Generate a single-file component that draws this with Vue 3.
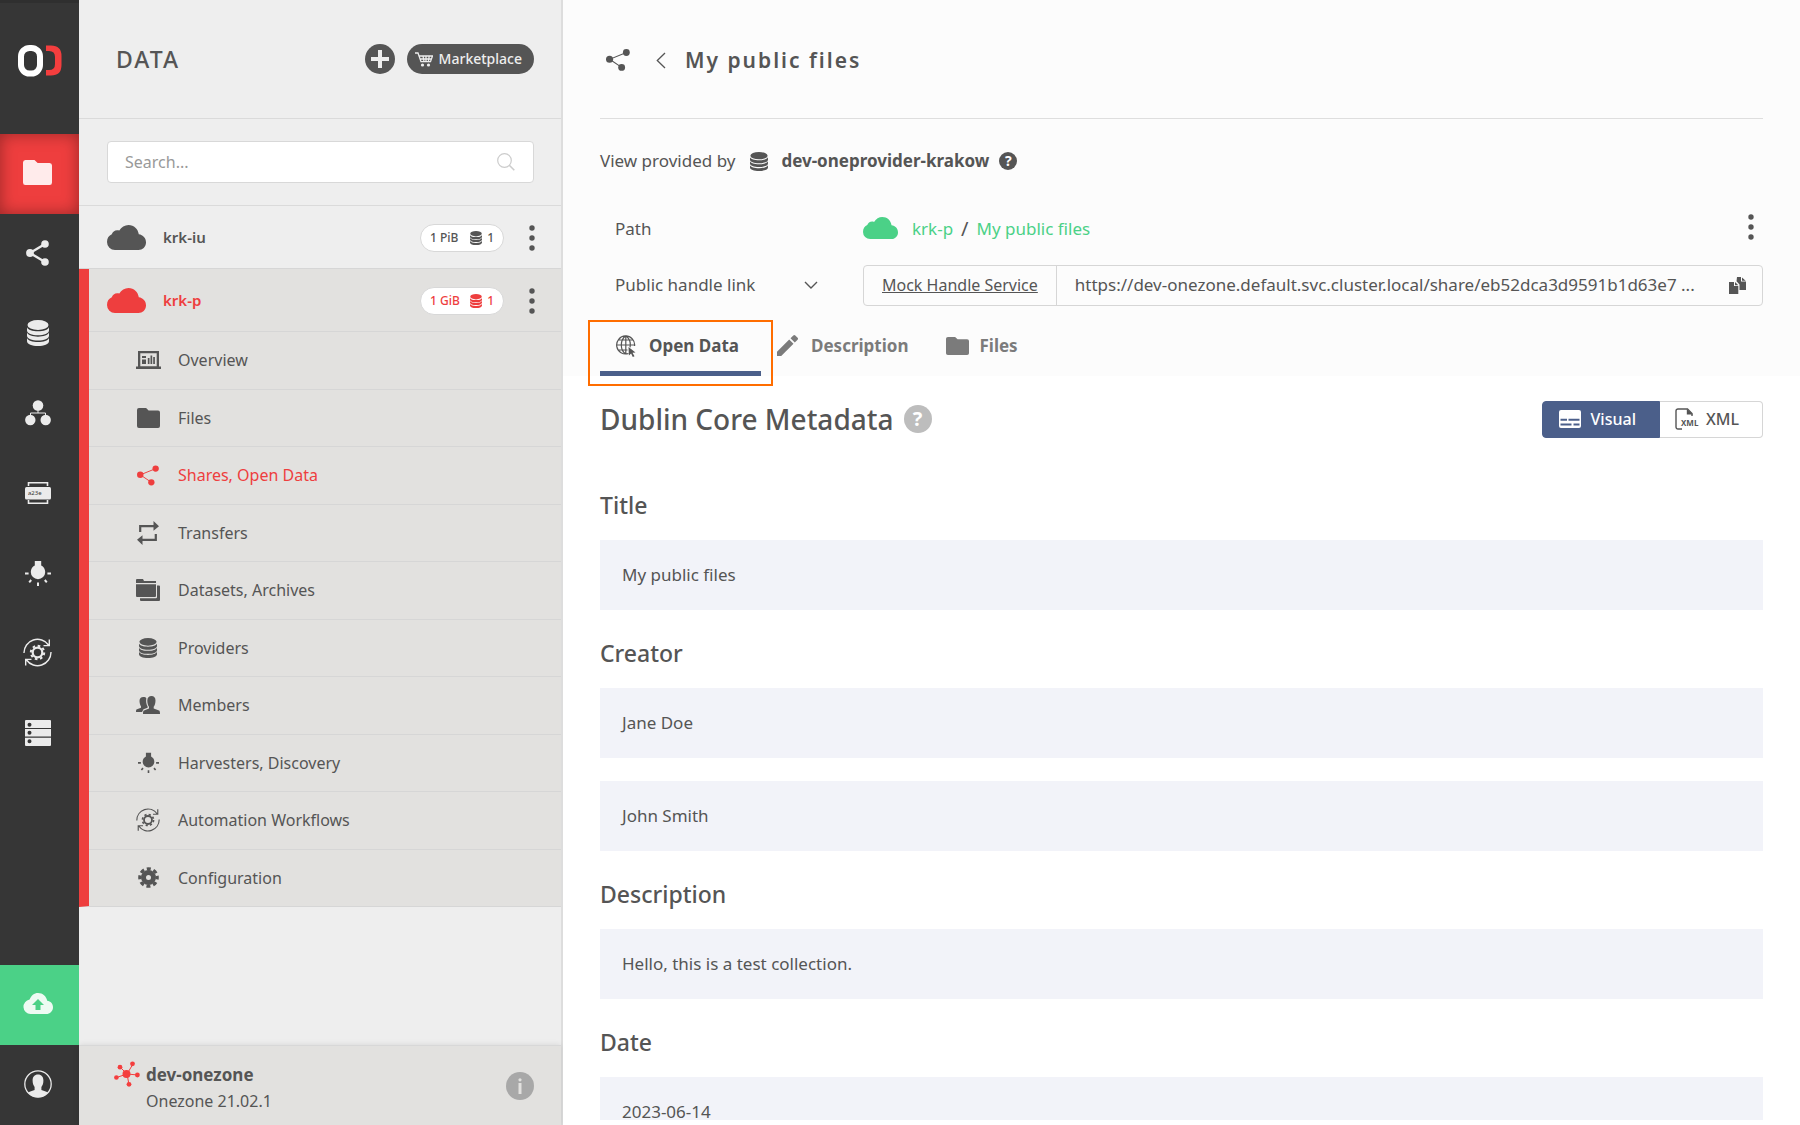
<script setup>
import { ref } from 'vue'

const railItems = [
  { id: 'folder', label: 'Data', w: 29, h: 25, active: true },
  { id: 'share', label: 'Shares', w: 23, h: 26 },
  { id: 'db', label: 'Providers', w: 22, h: 26 },
  { id: 'groups', label: 'Groups', w: 26, h: 26 },
  { id: 'token', label: 'Tokens', w: 26, h: 24 },
  { id: 'bulb', label: 'Discovery', w: 26, h: 26 },
  { id: 'auto', label: 'Automation', w: 29, h: 29 },
  { id: 'server', label: 'Clusters', w: 26, h: 26 },
]

const spaces = [
  { name: 'krk-iu', size: '1 PiB', count: 1 },
  { name: 'krk-p', size: '1 GiB', count: 1, active: true },
]

const menu = [
  { id: 'overview', label: 'Overview', w: 25, h: 18 },
  { id: 'folder', label: 'Files', w: 23, h: 20 },
  { id: 'shares', label: 'Shares, Open Data', w: 22, h: 21, active: true },
  { id: 'transfer', label: 'Transfers', w: 22, h: 24 },
  { id: 'datasets', label: 'Datasets, Archives', w: 24, h: 22 },
  { id: 'db', label: 'Providers', w: 18, h: 20 },
  { id: 'members', label: 'Members', w: 24, h: 18 },
  { id: 'bulb', label: 'Harvesters, Discovery', w: 21, h: 21 },
  { id: 'auto', label: 'Automation Workflows', w: 24, h: 24 },
  { id: 'gear', label: 'Configuration', w: 21, h: 21 },
]

const sections = [
  { name: 'Title', values: ['My public files'] },
  { name: 'Creator', values: ['Jane Doe', 'John Smith'] },
  { name: 'Description', values: ['Hello, this is a test collection.'] },
  { name: 'Date', values: ['2023-06-14'] },
]

const search = ref('')
const handleUrl = ref('https://dev-onezone.default.svc.cluster.local/share/eb52dca3d9591b1d63e7 ...')
</script>

<template>
  <svg class="defs" aria-hidden="true">
    <symbol id="folder" viewBox="0 0 24 20" preserveAspectRatio="none">
      <path fill="currentColor" d="M2 0h7.5l2.6 2.4H22a2 2 0 0 1 2 2V18a2 2 0 0 1-2 2H2a2 2 0 0 1-2-2V2a2 2 0 0 1 2-2z" />
    </symbol>
    <symbol id="share" viewBox="0 0 23 26">
      <path stroke="currentColor" stroke-width="2.4" d="M19 4 4 13l15 9" fill="none" />
      <circle cx="19" cy="4" r="3.8" fill="currentColor" /><circle cx="4" cy="13" r="3.9" fill="currentColor" /><circle cx="19" cy="22" r="3.8" fill="currentColor" />
    </symbol>
    <symbol id="shares" viewBox="0 0 23 21">
      <path stroke="currentColor" stroke-width="1" d="M19.5 3.3 3.5 9.8 15 17.6" fill="none" />
      <circle cx="19.5" cy="3.3" r="3.3" fill="currentColor" /><circle cx="3.4" cy="9.8" r="3.4" fill="currentColor" /><circle cx="15" cy="17.6" r="3.3" fill="currentColor" />
    </symbol>
    <symbol id="db" viewBox="0 0 22 26" preserveAspectRatio="none">
      <g fill="currentColor">
        <ellipse cx="11" cy="5" rx="10.5" ry="5" />
        <path d="M0 7.2c1 2.6 5.500 4.100 11 4.100s10-1.500 11-4.100v3.300c0 3-5 4.800-11 4.800s-11-1.800-11-4.800z" />
        <path d="M0 12.600c1 2.600 5.500 4.100 11 4.100s10-1.500 11-4.100v3.200c0 3-5 4.800-11 4.800s-11-1.800-11-4.800z" />
        <path d="M0 18c1 2.600 5.500 4.100 11 4.100s10-1.500 11-4.100v3.200c0 3-5 4.800-11 4.800s-11-1.800-11-4.800z" />
      </g>
    </symbol>
    <symbol id="groups" viewBox="0 0 26 26">
      <path d="M13 8v5M5.500 17v-4h15v4" stroke="currentColor" fill="none" />
      <g fill="currentColor"><circle cx="13" cy="5.500" r="5.300" /><circle cx="5.300" cy="20" r="5.200" /><circle cx="20.700" cy="20" r="5.200" /></g>
    </symbol>
    <symbol id="token" viewBox="0 0 26 24">
      <path d="M3.500 5V1.800h19V5M3.500 19v3.200h19V19" stroke="currentColor" stroke-width="1.600" fill="none" />
      <rect y="6" width="26" height="12.500" rx="1.500" fill="currentColor" />
    </symbol>
    <symbol id="bulb" viewBox="0 0 26 26">
      <path fill="currentColor" d="M9.800 1h6.400v4.500c2.400 1.200 4 3.600 4 6.500a7.200 7.200 0 0 1-14.400 0c0-2.900 1.600-5.300 4-6.500z" />
      <path stroke="currentColor" stroke-width="2" d="M0 13.500h3.600M22.400 13.500H26M13 22.500V26M6.200 20l-2 2.300M19.800 20l2 2.300" />
    </symbol>
    <symbol id="auto" viewBox="0 0 29 29">
      <g fill="none" stroke="currentColor" stroke-width="1.400">
        <path d="M1 15A13.500 13.500 0 0 1 25.500 7M26.300 1.500V7.600H20.500M28 14A13.500 13.500 0 0 1 3.500 22M2.700 27.500V21.400H8.500" />
        <circle cx="14.500" cy="14.500" r="4.800" stroke-width="2.200" />
        <circle cx="14.500" cy="14.500" r="6.700" stroke-width="2" stroke-dasharray="2.630 2.630" />
      </g>
    </symbol>
    <symbol id="gear" viewBox="0 0 21 21">
      <g fill="none" stroke="currentColor">
        <circle cx="10.500" cy="10.500" r="5" stroke-width="5" />
        <circle cx="10.500" cy="10.500" r="8.700" stroke-width="3.200" stroke-dasharray="4 2.833" stroke-dashoffset="2" />
      </g>
    </symbol>
    <symbol id="server" viewBox="0 0 26 26">
      <path fill="currentColor" fill-rule="evenodd" d="M1 0h24a1 1 0 0 1 1 1v7H0V1a1 1 0 0 1 1-1zM4.500 2.800a2 2 0 1 0 0 4 2 2 0 0 0 0-4zM0 9h26v7.500H0zM4.500 10.800a2 2 0 1 0 0 4 2 2 0 0 0 0-4zM0 17.700h26V25a1 1 0 0 1-1 1H1a1 1 0 0 1-1-1zM4.500 19.300a2 2 0 1 0 0 4 2 2 0 0 0 0-4z" />
    </symbol>
    <symbol id="cloud" viewBox="0 0 39 25" preserveAspectRatio="none">
      <path fill="currentColor" d="M8 25a8 8 0 0 1-8-8c0-4 2-6.600 4.800-7.800C5.500 6.300 9 4.300 12.300 5.600 14.300 2.200 17.800 0 21.500 0c5.500 0 9.500 4 10.300 9.300C36 10 39 13 39 17.500c0 4.500-3.500 7.500-7.500 7.500z" />
    </symbol>
    <symbol id="overview" viewBox="0 0 25 18">
      <path fill="currentColor" fill-rule="evenodd" d="M2 0h21v15.500h2V18H0v-2.500h2zM4.300 2.200v13h16.400v-13z" />
      <path fill="currentColor" d="M6 5h4v2H6zM6 9h4v4H6zM6 8h4v.6H6zM11.800 7h1.700v6h-1.700zM14.500 4.500h1.700V13h-1.700zM17.200 6h1.700v7h-1.700z" />
    </symbol>
    <symbol id="transfer" viewBox="0 0 22 24">
      <path d="M3.200 11V5.200H18M18.800 13v5.800H4" stroke="currentColor" stroke-width="2.200" fill="none" />
      <path fill="currentColor" d="M16.500 0 22 5.200l-5.500 4.600zM5.500 14.200 0 18.800 5.500 24z" />
    </symbol>
    <symbol id="datasets" viewBox="0 0 24 22">
      <path fill="currentColor" d="M1 0h6l1 2h12v2H0V1a1 1 0 0 1 1-1zM0 5.300h20V17a1 1 0 0 1-1 1H1a1 1 0 0 1-1-1zM21 6.500h2a1 1 0 0 1 1 1V21a1 1 0 0 1-1 1H5a1 1 0 0 1-1-1v-1.700h16a1 1 0 0 0 1-1z" />
    </symbol>
    <symbol id="members" viewBox="0 0 24 18">
      <path fill="currentColor" d="M15.500 0c2.500 0 4 1.500 4 4.500 0 3-.8 5-1.800 6.300v1.700l5.300 2c.7.300 1 1.300 1 3.500H7c0-2.200.3-3.200 1-3.500l5-2v-1.700C12 9.500 11.300 7.500 11.300 4.500 11.300 1.500 13 0 15.500 0zM7.300 1C9 1 10 1.500 10.300 2.200c-.5 3.500 0 6 1.300 8.300v1.200L7.500 13.300 6 16H0c0-1.600.2-2.400 1-2.700l4-1.500v-1.500C4 9 3.500 7 3.500 4.800 3.500 2.300 5 1 7.300 1z" />
    </symbol>
    <symbol id="search" viewBox="0 0 18 18">
      <g fill="none" stroke="currentColor" stroke-width="1.200"><circle cx="7.500" cy="7.500" r="6.800" /><path d="m12.300 12.300 5 5" stroke-width="1.600" /></g>
    </symbol>
    <symbol id="dots" viewBox="0 0 6 26">
      <g fill="currentColor"><circle cx="3" cy="3" r="2.700" /><circle cx="3" cy="13" r="2.700" /><circle cx="3" cy="23" r="2.700" /></g>
    </symbol>
    <symbol id="cart" viewBox="0 0 18 15">
      <g fill="none" stroke="currentColor" stroke-width="1.300"><path d="M0 1h3l3 8.700h9.500L17.500 4H4.300M8 4l1 5.500M11 4v5.500M14.200 4l-.8 5.500M4.800 7h11.500" /></g>
      <circle cx="7.500" cy="13" r="1.600" fill="currentColor" /><circle cx="13.500" cy="13" r="1.600" fill="currentColor" />
    </symbol>
    <symbol id="upload" viewBox="0 0 30 21" preserveAspectRatio="none">
      <path fill="currentColor" fill-rule="evenodd" d="M7.500 21A7.300 7.300 0 0 1 6.600 6.500C8 2.700 11.200 0 15 0c4.800 0 8.300 3.300 9.200 7.700C27.600 8 30 10.700 30 14.200c0 3.900-3 6.800-6.800 6.800zM15 6l-6 6h3.500v5h5v-5H21z" />
    </symbol>
    <symbol id="user" viewBox="0 0 28 28">
      <circle cx="14" cy="14" r="13.200" fill="none" stroke="currentColor" stroke-width="1.300" />
      <path fill="currentColor" d="M14 4.500c3.500 0 5.400 2.400 5.400 6 0 3.500-1 5-2 6.500v3l4.300 1.500c1 .4 1.600.8 2 1.200A13 13 0 0 1 14 27.300a13 13 0 0 1-9.700-4.600c.4-.4 1-.8 2-1.200l4.300-1.500v-3c-1-1.500-2-3-2-6.500 0-3.600 1.900-6 5.400-6z" />
    </symbol>
    <symbol id="zone" viewBox="0 0 26 26">
      <path stroke="currentColor" d="m13 13 6-10M13 13 6 6M13 13 2.500 16.500M13 13l11 1M13 13l2 10.500" />
      <g fill="currentColor"><circle cx="12.500" cy="13" r="4" /><circle cx="18.500" cy="2.800" r="2.400" /><circle cx="6" cy="6.200" r="2.400" /><circle cx="2.400" cy="16.500" r="2.300" /><circle cx="23.400" cy="14" r="2.400" /><circle cx="15" cy="23.300" r="2.400" /></g>
    </symbol>
    <symbol id="left" viewBox="0 0 10 17"><path d="m9 1-7.700 7.500L9 16" fill="none" stroke="currentColor" stroke-width="1.300" /></symbol>
    <symbol id="down" viewBox="0 0 14 8"><path d="m1 1 6 6 6-6" fill="none" stroke="currentColor" stroke-width="1.400" /></symbol>
    <symbol id="copy" viewBox="0 0 17 17">
      <path fill="currentColor" d="M0 5h5v4h4.300v8H0zM6 5l3.300 3.200H6zM8 0h4v4.500h5V13h-6.500V7.500L7.500 4.300zM13 .5l3.700 3.200H13z" />
    </symbol>
    <symbol id="globe" viewBox="0 0 20 22">
      <g fill="none" stroke="currentColor" stroke-width="1.200"><path d="M12.500 18.500A9 9 0 1 1 18.600 11M9.800.8C3.800 5 3.800 15 9.800 19M9.800.8c3.800 2.800 5 7.500 4.200 11.500M9.800.8V19M.8 10h18M2.500 5h15M2.500 15h9" /></g>
      <path fill="currentColor" d="m12.500 12 7 5.500-3 .3 2 3.500-1.700.7-1.700-3.500-2.200 2z" />
    </symbol>
    <symbol id="pencil" viewBox="0 0 21 21">
      <path fill="currentColor" d="M0 16.800 12.200 4.500l4.300 4.300L4.200 21H0zM13.500 3.300l2.800-2.800a1.500 1.500 0 0 1 2 0l2.300 2.300a1.500 1.500 0 0 1 0 2l-2.800 2.800z" />
    </symbol>
    <symbol id="visual" viewBox="0 0 22 18" preserveAspectRatio="none">
      <path fill="currentColor" fill-rule="evenodd" d="M2 0h18a2 2 0 0 1 2 2v14a2 2 0 0 1-2 2H2a2 2 0 0 1-2-2V2a2 2 0 0 1 2-2zM1.500 8.800v2h6.500v-2zM9.500 8.800v2h11v-2zM1.500 13.500v2h11v-2zM14.500 13.500v2h6v-2z" />
    </symbol>
    <symbol id="xml" viewBox="0 0 24 22">
      <path d="M7 21H3a2 2 0 0 1-2-2V3a2 2 0 0 1 2-2h9.500L17 5.500V8" fill="none" stroke="currentColor" stroke-width="1.400" />
      <path d="M11.800 1v5.500H18z" fill="currentColor" />
    </symbol>
  </svg>

  <div class="app">
    <nav class="rail" aria-label="Main">
      <a class="logo" href="#" aria-label="Onedata">
        <svg width="44" height="32" viewBox="0 0 44 32">
          <rect x="3" y="3" width="19" height="25.500" rx="8.500" fill="none" stroke="#fff" stroke-width="6" />
          <path d="M28 0.500h5q10.500 0 10.500 10.500v9q0 10.500-10.500 10.500h-5v-5.500h3q6 0 6-6v-7q0-6-6-6h-3z" fill="#f43e3e" />
        </svg>
      </a>
      <a v-for="r in railItems" :key="r.id" href="#" class="rail-item" :class="{ active: r.active }" :aria-label="r.label">
        <svg :width="r.w" :height="r.h"><use :href="'#' + r.id" /><text v-if="r.id === 'token'" x="3" y="14" class="token-text">a23e</text></svg>
      </a>
      <a href="#" class="rail-item upload" aria-label="Upload"><svg width="30" height="21"><use href="#upload" /></svg></a>
      <a href="#" class="rail-item" aria-label="Account"><svg width="28" height="28"><use href="#user" /></svg></a>
    </nav>

    <aside class="sidebar">
      <header class="side-head">
        <h2>DATA</h2>
        <button class="add" aria-label="Add"><svg width="18" height="18" viewBox="0 0 18 18"><path d="M9 0v18M0 9h18" stroke="#eee" stroke-width="4" /></svg></button>
        <button class="market"><svg width="18" height="15"><use href="#cart" /></svg>Marketplace</button>
      </header>
      <div class="search-row">
        <label class="search">
          <input v-model="search" type="text" placeholder="Search..." aria-label="Search" />
          <svg width="18" height="18"><use href="#search" /></svg>
        </label>
      </div>
      <div v-for="s in spaces" :key="s.name" class="space" :class="{ active: s.active }">
        <div class="space-row">
          <svg class="cloud" width="39" height="25"><use href="#cloud" /></svg>
          <a href="#" class="space-name">{{ s.name }}</a>
          <div class="space-side">
            <span class="badge"><span>{{ s.size }}</span><span class="count"><svg width="12" height="14"><use href="#db" /></svg>{{ s.count }}</span></span>
            <button class="bare" aria-label="Space actions"><svg width="6" height="26"><use href="#dots" /></svg></button>
          </div>
        </div>
        <ul v-if="s.active" class="menu">
          <li v-for="m in menu" :key="m.label">
            <a href="#" :class="{ current: m.active }"><span class="menu-icon"><svg :width="m.w" :height="m.h"><use :href="'#' + m.id" /></svg></span>{{ m.label }}</a>
          </li>
        </ul>
      </div>
      <footer class="side-foot">
        <svg class="zone" width="26" height="26"><use href="#zone" /></svg>
        <div class="zone-text"><strong>dev-onezone</strong><span>Onezone 21.02.1</span></div>
        <button class="info" aria-label="Information"><svg width="28" height="28" viewBox="0 0 28 28"><circle cx="14" cy="14" r="14" fill="#a8a8a8" /><circle cx="14" cy="7.800" r="1.600" fill="#e2e1df" /><path d="M14 11v11" stroke="#e2e1df" stroke-width="3" /></svg></button>
      </footer>
    </aside>

    <main class="main">
      <div class="top">
        <header class="title-bar">
          <svg width="24" height="22"><use href="#shares" /></svg>
          <button class="bare back" aria-label="Back"><svg width="10" height="17"><use href="#left" /></svg></button>
          <h1>My public files</h1>
        </header>
        <p class="provider">
          View provided by
          <svg class="provider-db" width="18" height="19"><use href="#db" /></svg>
          <strong>dev-oneprovider-krakow</strong>
          <span class="help small">?</span>
        </p>
        <div class="field path">
          <span class="field-label">Path</span>
          <svg class="path-cloud" width="35" height="22"><use href="#cloud" /></svg>
          <a href="#">krk-p</a><span class="slash">/</span><a href="#">My public files</a>
          <button class="bare more" aria-label="Share actions"><svg width="6" height="26"><use href="#dots" /></svg></button>
        </div>
        <div class="field">
          <label class="field-label" for="handle">Public handle link</label>
          <button class="bare toggle" aria-label="Link type"><svg width="14" height="8"><use href="#down" /></svg></button>
          <div class="handle">
            <span class="service"><a href="#">Mock Handle Service</a></span>
            <input id="handle" v-model="handleUrl" type="text" readonly />
            <button class="bare copy" aria-label="Copy"><svg width="17" height="17"><use href="#copy" /></svg></button>
          </div>
        </div>
        <nav class="tabs" aria-label="Share views">
          <a href="#" class="tab selected"><svg width="20" height="22"><use href="#globe" /></svg>Open Data</a>
          <a href="#" class="tab"><svg width="21" height="21"><use href="#pencil" /></svg>Description</a>
          <a href="#" class="tab files"><svg width="23" height="18"><use href="#folder" /></svg>Files</a>
        </nav>
      </div>

      <div class="body">
        <div class="meta-head">
          <h2>Dublin Core Metadata</h2>
          <span class="help">?</span>
          <div class="modes">
            <button class="on"><svg width="22" height="18"><use href="#visual" /></svg>Visual</button>
            <button><svg width="24" height="22"><use href="#xml" /><text x="6" y="18" class="xml-text">XML</text></svg>XML</button>
          </div>
        </div>
        <section v-for="s in sections" :key="s.name">
          <h3>{{ s.name }}</h3>
          <p v-for="v in s.values" :key="v" class="value">{{ v }}</p>
        </section>
      </div>
    </main>
  </div>
</template>

<style>
body { background: #fff; }
</style>

<style scoped>
* { box-sizing: border-box; }
h1, h2, h3, p, ul { margin: 0; padding: 0; }
svg { display: block; flex: none; }
a { color: inherit; text-decoration: none; }
button, input { font: inherit; color: inherit; }
button { padding: 0; border: 0; cursor: pointer; }
.defs { position: absolute; width: 0; height: 0; }
.bare { background: none; }
.token-text { font: 6px "Noto Sans", sans-serif; fill: #363636; }
.xml-text { font: 700 8px "Noto Sans", sans-serif; fill: currentColor; }

.app {
  display: flex;
  height: 100vh;
  overflow: hidden;
  font: 17px/24px "Noto Sans", sans-serif;
  color: #555;
}

.rail {
  flex: none;
  width: 79px;
  display: flex;
  flex-direction: column;
  background: #363636;
  border-top: 3px solid #2f2f2f;
  color: #ebebeb;
}
.logo { height: 131px; padding: 42px 0 0 18px; }
.rail-item {
  height: 80px;
  display: flex;
  align-items: center;
  justify-content: center;
  padding: 0 4px 3px 0;
}
.rail-item.active { background: #ee3e3e; color: #ffebeb; box-shadow: inset 0 0 16px rgba(0, 0, 0, .36); }
.rail-item.upload { margin-top: auto; background: #4bd187; color: #edfbf3; }

.sidebar {
  flex: none;
  width: 484px;
  display: flex;
  flex-direction: column;
  background: #eee;
  border-right: 2px solid #ddd;
}
.side-head {
  height: 119px;
  display: flex;
  align-items: center;
  padding: 0 27px 0 37px;
  border-bottom: 1px solid #dadada;
}
.side-head h2 { flex: 1; font-size: 23px; font-weight: 500; letter-spacing: 2px; }
.add { width: 30px; height: 30px; display: grid; place-items: center; border-radius: 50%; background: #555; }
.market {
  height: 30px;
  margin-left: 12px;
  padding: 0 12px 0 8px;
  display: flex;
  align-items: center;
  gap: 6px;
  border-radius: 15px;
  background: #555;
  color: #eee;
  font-size: 14px;
  font-weight: 500;
}
.search-row { padding: 22px 27px 22px 28px; border-bottom: 1px solid #dadada; }
.search {
  height: 42px;
  display: flex;
  align-items: center;
  padding: 0 18px 0 17px;
  border: 1px solid #d8d8d8;
  border-radius: 4px;
  background: #fff;
  color: #ccc;
}
.search input { flex: 1; min-width: 0; padding: 0; border: 0; outline: 0; background: none; font-size: 16px; color: #555; }
.search input::placeholder { color: #999; opacity: 1; }
.space { border-bottom: 1px solid #d6d6d6; }
.space-row { height: 62px; display: flex; align-items: center; padding: 0 26px 0 28px; }
.space-name { flex: 1; margin-left: 17px; font-size: 15px; font-weight: 600; }
.space-side { display: flex; align-items: center; padding-top: 2px; }
.badge {
  height: 28px;
  width: 84px;
  display: flex;
  align-items: center;
  justify-content: space-between;
  padding: 0 9px;
  margin-right: 25px;
  border: 1px solid #d8d8d8;
  border-radius: 14px;
  background: #fff;
  font-size: 12px;
  font-weight: 500;
}
.count { display: flex; align-items: center; gap: 5px; }
.space.active { background: #e2e1df; border-left: 10px solid #ee3e3e; }
.active .space-row { padding-left: 18px; }
.active .cloud, .active .space-name, .active .badge, .current { color: #ee3e3e; }
.menu { list-style: none; }
.menu li { height: 57px; border-top: 1px solid #d6d6d6; }
.menu li:nth-child(odd) { height: 58px; }
.menu a { height: 100%; padding-bottom: 1px; display: flex; align-items: center; font-size: 16px; }
.menu-icon { width: 24px; margin: 0 18px 0 47px; display: flex; justify-content: center; }
.side-foot {
  height: 80px;
  margin-top: auto;
  padding: 0 27px 0 35px;
  display: flex;
  align-items: center;
  background: #e2e1df;
  border-top: 1px solid #d8d8d8;
  box-shadow: 0 0 6px rgba(0, 0, 0, .1);
}
.zone { color: #f43e3e; margin-bottom: 24px; }
.zone-text { flex: 1; margin-left: 6px; padding-top: 4px; display: flex; flex-direction: column; gap: 2px; font-size: 16px; }
.zone-text strong { font-size: 17px; }
.info { background: none; }

.main { flex: 1; min-width: 0; display: flex; flex-direction: column; padding-bottom: 5px; background: #fff; }
.top { flex: none; padding: 0 37px; background: #fcfcfc; }
.title-bar { height: 119px; display: flex; align-items: center; padding: 2px 0 0 6px; border-bottom: 1px solid #dedede; }
.title-bar h1 { font-size: 21px; font-weight: 600; letter-spacing: 2px; }
.back { margin: 0 19px 0 26px; }
.provider { display: flex; align-items: center; height: 84px; }
.provider-db { margin: 0 13px 0 15px; }
.help {
  width: 28px;
  height: 28px;
  margin-left: 10px;
  border-radius: 50%;
  background: #bdbdbd;
  color: #fff;
  font-size: 20px;
  font-weight: 700;
  line-height: 28px;
  text-align: center;
}
.help.small { width: 18px; height: 18px; background: #555; font-size: 14px; line-height: 18px; }
.field { height: 56px; display: flex; align-items: center; padding-left: 15px; }
.field-label { width: 189px; }
.path { height: 54px; padding-bottom: 2px; }
.path a { color: #4bd187; }
.path-cloud { color: #4bd187; margin: 0 14px 3px 59px; }
.slash { margin: 0 8px; font-size: 20px; }
.more { margin-left: auto; padding: 0 9px 5px 0; }
.toggle { margin-right: 45px; }
.handle { flex: 1; min-width: 0; height: 41px; display: flex; border: 1px solid #d6d6d6; border-radius: 4px; }
.service { padding: 0 18px; border-right: 1px solid #d6d6d6; font-size: 16px; line-height: 39px; }
.service a { text-decoration: underline; }
.handle input {
  flex: 1;
  min-width: 0;
  padding: 0 0 0 18px;
  border: 0;
  outline: 0;
  background: none;
}
.copy { padding: 0 16px; }
.tabs { height: 63px; display: flex; }
.tab { display: flex; align-items: center; gap: 13px; padding: 7px 22px 0 16px; border-bottom: 5px solid transparent; font-weight: 700; color: #7b7b7b; }
.tab.selected { position: relative; border-color: #4b5f8a; color: #555; }
.tab.files { gap: 10px; }
.tab.selected::after { content: ""; position: absolute; inset: 7px -12px -15px -12px; border: 2px solid #ff6d00; }

.body { flex: 1; min-height: 0; overflow: hidden; padding: 0 37px; }
.meta-head { height: 86px; display: flex; align-items: center; }
.meta-head h2 { font-size: 28px; font-weight: 500; line-height: 38px; }
.modes { margin-left: auto; display: flex; }
.modes button {
  height: 37px;
  display: flex;
  align-items: center;
  gap: 7px;
  padding: 0 23px 0 15px;
  border: 1px solid #d6d6d6;
  border-left: 0;
  border-radius: 0 4px 4px 0;
  background: #fff;
  font-size: 16px;
  font-weight: 500;
}
.modes .on { gap: 10px; padding-left: 16px; border: 1px solid #4b5f8a; border-radius: 4px 0 0 4px; background: #4b5f8a; color: #fff; }
section h3 { padding: 27px 0 19px; font-size: 23px; font-weight: 500; line-height: 32px; }
.value { padding: 23px 22px; line-height: 24px; background: #f2f3f9; }
.value + .value { margin-top: 23px; }
</style>
